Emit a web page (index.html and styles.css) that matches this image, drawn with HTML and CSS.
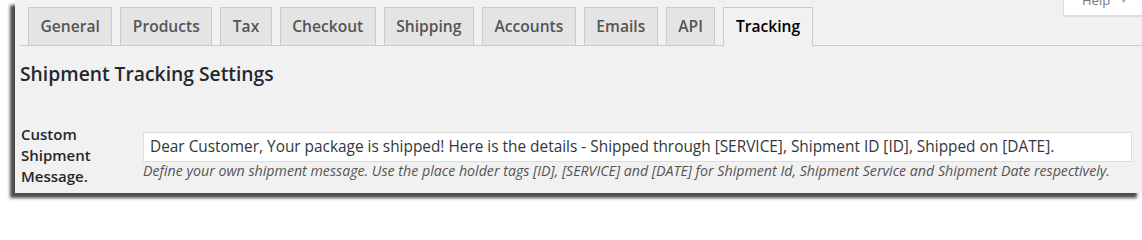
FILE: index.html
```html
<!DOCTYPE html>
<html>
<head>
<meta charset="utf-8">
<link rel="stylesheet" href="styles.css">
</head>
<body>
<div class="panel">
  <div class="help-tab"><span class="help-text">Help</span><span class="help-arrow">&#9660;</span></div>
  <nav class="tabs">
    <a class="tab">General</a>
    <a class="tab">Products</a>
    <a class="tab">Tax</a>
    <a class="tab">Checkout</a>
    <a class="tab">Shipping</a>
    <a class="tab">Accounts</a>
    <a class="tab">Emails</a>
    <a class="tab">API</a>
    <a class="tab tab-active">Tracking</a>
  </nav>
  <h2 class="title">Shipment Tracking Settings</h2>
  <div class="row">
    <div class="label">Custom Shipment Message.</div>
    <div class="field">
      <div class="input">Dear Customer, Your package is shipped! Here is the details - Shipped through [SERVICE], Shipment ID [ID], Shipped on [DATE].</div>
      <p class="desc">Define your own shipment message. Use the place holder tags [ID], [SERVICE] and [DATE] for Shipment Id, Shipment Service and Shipment Date respectively.</p>
    </div>
  </div>
</div>
</body>
</html>
```
FILE: styles.css
```css
html, body {
  margin: 0;
  padding: 0;
  background: #ffffff;
  font-family: "Open Sans", "Noto Sans", sans-serif;
}
body {
  min-height: 206px;
  padding-bottom: 13px;
  box-sizing: border-box;
}
.panel {
  position: relative;
  margin-left: 15px;
  height: 193px;
  background: #f1f1f1;
  padding: 0 0 0 5px;
  box-sizing: border-box;
  box-shadow: -5px 5px 3px rgba(0, 0, 0, 0.7);
  overflow: hidden;
}
.help-tab {
  position: absolute;
  top: -9px;
  right: 0;
  left: 1048px;
  height: 25px;
  box-sizing: border-box;
  background: #ffffff;
  border-left: 1px solid #dddddd;
  border-bottom: 1px solid #dddddd;
  box-shadow: 0 1px 1px rgba(0, 0, 0, 0.08);
  font-size: 13px;
  line-height: 17px;
  color: #72777c;
  padding-left: 18px;
}
.help-arrow {
  font-size: 9px;
  color: #a0a5aa;
  margin-left: 9px;
  vertical-align: 2px;
}
.tabs {
  display: flex;
  padding-top: 7px;
  border-bottom: 1px solid #cccccc;
}
.tab {
  display: block;
  margin-left: 8px;
  padding: 6px 11.5px 7px;
  font-size: 15.6px;
  line-height: 24px;
  font-weight: 600;
  color: #555555;
  background: #e4e4e4;
  border: 1px solid #cccccc;
  border-bottom: none;
}
.tab-active {
  background: #f1f1f1;
  color: #000000;
  margin-bottom: -1px;
  padding-bottom: 8px;
}
.title {
  margin: 15px 0 0 0;
  font-size: 19.3px;
  line-height: 26px;
  font-weight: 600;
  color: #23282d;
}
.row {
  display: flex;
  margin-top: 37px;
  padding-right: 10px;
}
.label {
  width: 122px;
  padding-left: 1px;
  flex-shrink: 0;
  font-size: 15px;
  line-height: 21px;
  font-weight: 600;
  color: #23282d;
}
.field {
  flex: 1;
  padding-top: 8px;
}
.input {
  height: 30px;
  box-sizing: border-box;
  border: 1px solid #dddddd;
  background: #ffffff;
  padding: 0 6px;
  font-size: 15.4px;
  line-height: 28px;
  color: #32373c;
  white-space: nowrap;
  overflow: hidden;
}
.desc {
  margin: 1px 0 0 0;
  font-size: 14.2px;
  line-height: 16px;
  font-style: italic;
  color: #555555;
}
```
